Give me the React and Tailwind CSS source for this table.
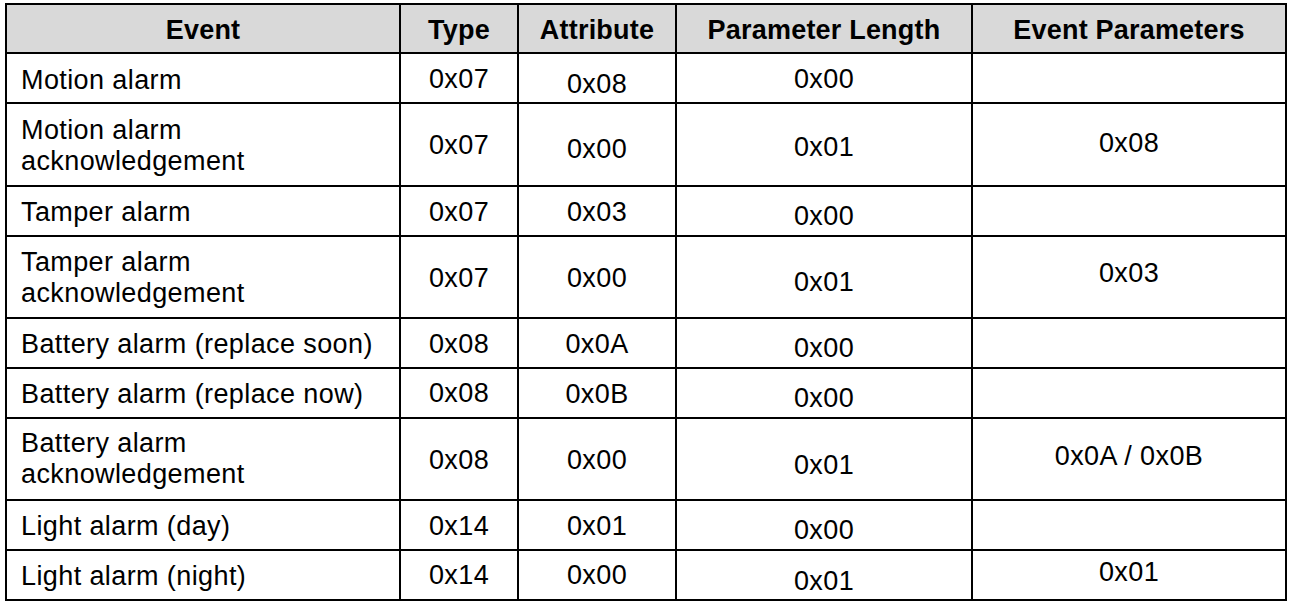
import React from 'react';

const COLS = 'grid grid-cols-[392px_116px_156px_294px_312px] gap-[2px]';

const HEADERS = ['Event', 'Type', 'Attribute', 'Parameter Length', 'Event Parameters'];

// each cell: [text lines, top padding] — offsets follow the source document's uneven spacing
const ROWS = [
  {
    h: 'h-[48px]',
    cells: [[['Motion alarm'], 'pt-[11px]'], [['0x07'], 'pt-[10px]'], [['0x08'], 'pt-[15px]'], [['0x00'], 'pt-[10px]'], [[], '']],
  },
  {
    h: 'h-[81px]',
    cells: [[['Motion alarm', 'acknowledgement'], 'pt-[11px]'], [['0x07'], 'pt-[26px]'], [['0x00'], 'pt-[30px]'], [['0x01'], 'pt-[28px]'], [['0x08'], 'pt-[24px]']],
  },
  {
    h: 'h-[48px]',
    cells: [[['Tamper alarm'], 'pt-[10px]'], [['0x07'], 'pt-[10px]'], [['0x03'], 'pt-[10px]'], [['0x00'], 'pt-[14px]'], [[], '']],
  },
  {
    h: 'h-[80px]',
    cells: [[['Tamper alarm', 'acknowledgement'], 'pt-[10px]'], [['0x07'], 'pt-[26px]'], [['0x00'], 'pt-[26px]'], [['0x01'], 'pt-[30px]'], [['0x03'], 'pt-[21px]']],
  },
  {
    h: 'h-[48px]',
    cells: [[['Battery alarm (replace soon)'], 'pt-[10px]'], [['0x08'], 'pt-[10px]'], [['0x0A'], 'pt-[10px]'], [['0x00'], 'pt-[14px]'], [[], '']],
  },
  {
    h: 'h-[48px]',
    cells: [[['Battery alarm (replace now)'], 'pt-[10px]'], [['0x08'], 'pt-[9px]'], [['0x0B'], 'pt-[10px]'], [['0x00'], 'pt-[14px]'], [[], '']],
  },
  {
    h: 'h-[80px]',
    cells: [[['Battery alarm', 'acknowledgement'], 'pt-[9px]'], [['0x08'], 'pt-[26px]'], [['0x00'], 'pt-[26px]'], [['0x01'], 'pt-[31px]'], [['0x0A / 0x0B'], 'pt-[22px]']],
  },
  {
    h: 'h-[48px]',
    cells: [[['Light alarm (day)'], 'pt-[10px]'], [['0x14'], 'pt-[10px]'], [['0x01'], 'pt-[10px]'], [['0x00'], 'pt-[14px]'], [[], '']],
  },
  {
    h: 'h-[48px]',
    cells: [[['Light alarm (night)'], 'pt-[10px]'], [['0x14'], 'pt-[9px]'], [['0x00'], 'pt-[9px]'], [['0x01'], 'pt-[15px]'], [['0x01'], 'pt-[6px]']],
  },
];

const Cell = ({ lines, pad, first }) => (
  <div className={`bg-white ${pad} ${first ? 'pl-[14px] text-left' : 'text-center'}`}>
    {lines.map((line, i) => (
      <div key={i} className="whitespace-nowrap">{line}</div>
    ))}
  </div>
);

export default function App() {
  return (
    <div className="min-h-screen bg-white pt-[3px] pl-[5px] font-['Liberation_Sans',Arial,sans-serif] text-[27px] leading-[31px] tracking-[0.4px] text-black">
      <div className="flex w-fit flex-col gap-[2px] bg-black p-[2px]">
        {/* Header */}
        <div className={`${COLS} h-[47px]`}>
          {HEADERS.map((label) => (
            <div key={label} className="bg-[#d9d9d9] pt-[10px] text-center font-bold tracking-[0.2px] whitespace-nowrap">
              {label}
            </div>
          ))}
        </div>

        {/* Body */}
        {ROWS.map((row, r) => (
          <div key={r} className={`${COLS} ${row.h}`}>
            {row.cells.map(([lines, pad], c) => (
              <Cell key={c} lines={lines} pad={pad} first={c === 0} />
            ))}
          </div>
        ))}
      </div>
    </div>
  );
}
